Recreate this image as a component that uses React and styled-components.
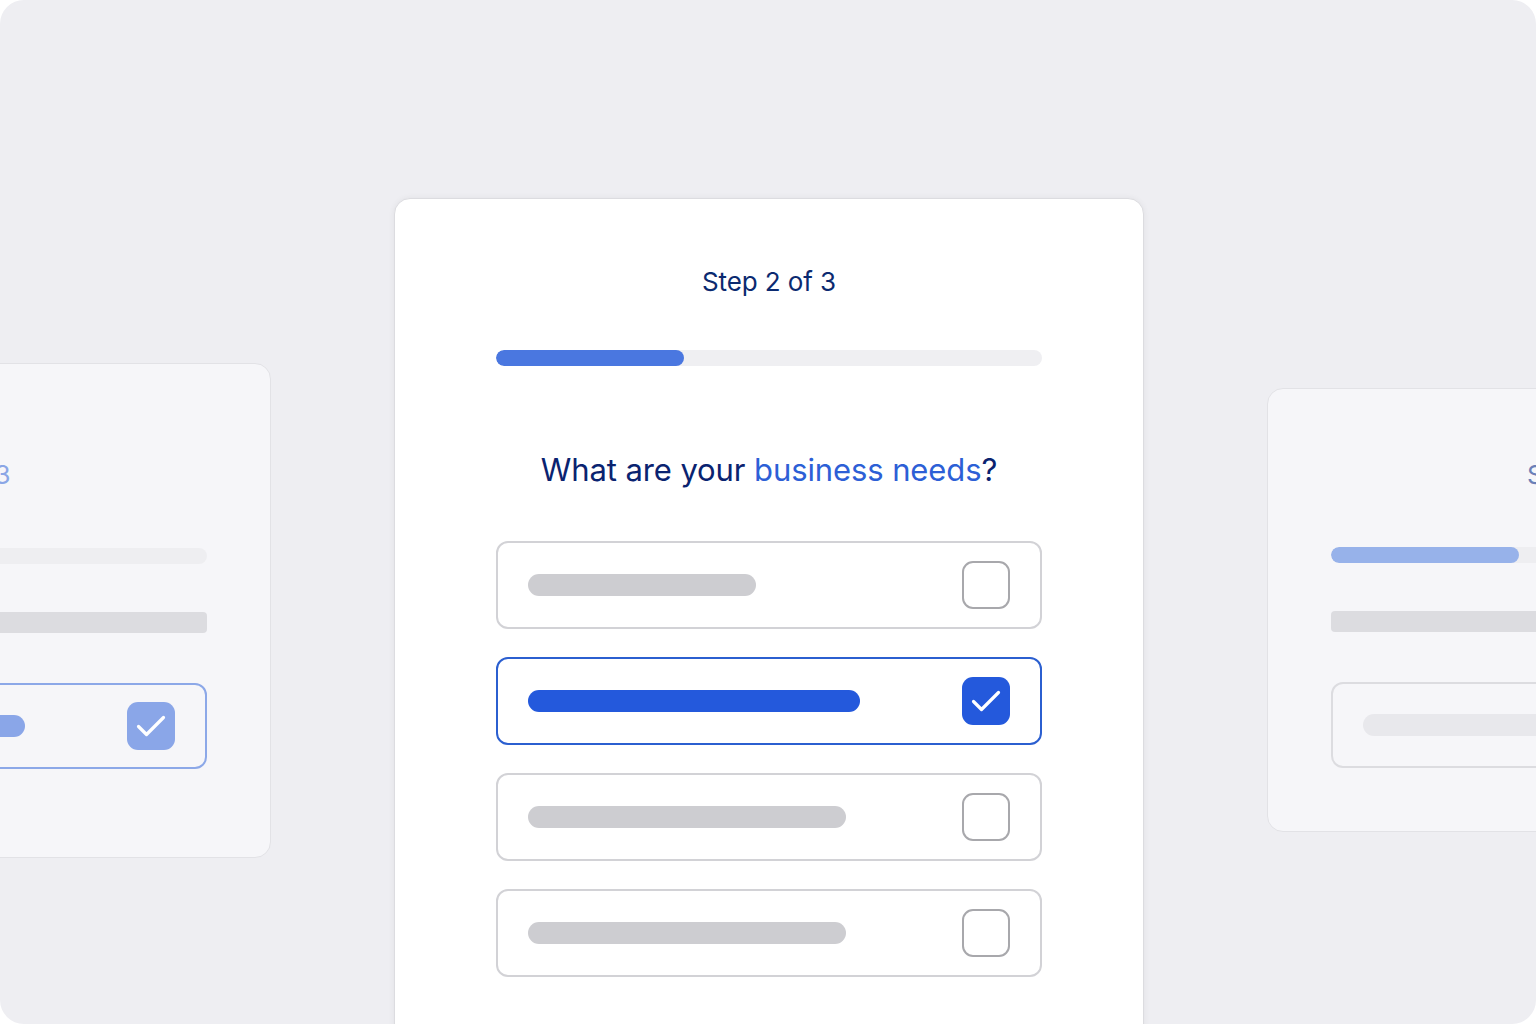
import React from "react";
import styled, { createGlobalStyle } from "styled-components";

const Global = createGlobalStyle`
  html, body { margin: 0; padding: 0; background: #ffffff; }
  body { font-family: Inter, "Noto Sans", "Liberation Sans", sans-serif; }
  * { box-sizing: border-box; }
`;

const Frame = styled.div`
  width: 1536px;
  height: 1024px;
  border-radius: 24px;
  background: #eeeef2;
  overflow: hidden;
  padding-left: 2px;
  display: flex;
  justify-content: center;
  align-items: flex-start;
  gap: 123px;
`;

const MainCard = styled.section`
  flex: 0 0 750px;
  width: 750px;
  height: 880px;
  margin-top: 198px;
  background: #ffffff;
  border: 1px solid #dcdce0;
  border-radius: 16px;
  box-shadow: 0 0 6px rgba(20, 20, 40, 0.06);
  padding: 67px 101px 0;
  display: flex;
  flex-direction: column;
`;

const SideCard = styled.section`
  flex: 0 0 674px;
  width: 674px;
  margin-top: ${(p) => p.$top}px;
  background: #f6f6f9;
  border: 1px solid #e2e2e6;
  border-radius: 16px;
  padding: ${(p) => p.$padTop}px 63px ${(p) => p.$padBottom}px;
  display: flex;
  flex-direction: column;
`;

const StepLabel = styled.div`
  font-size: 26px;
  line-height: 32px;
  text-align: center;
  color: ${(p) => p.$color || "#0b2a70"};
  transform: translateX(${(p) => p.$shift || 0}px);
  margin-bottom: ${(p) => p.$gap}px;
  letter-spacing: -0.1px;
`;

const Track = styled.div`
  height: 16px;
  border-radius: 8px;
  background: ${(p) => p.$bg || "#efeff2"};
  overflow: hidden;
  display: flex;
`;

const Fill = styled.div`
  width: ${(p) => p.$w}px;
  height: 100%;
  border-radius: 8px;
  background: ${(p) => p.$color};
`;

const Heading = styled.h2`
  margin: 85px 0 52px;
  font-size: 31px;
  line-height: 38px;
  font-weight: 400;
  text-align: center;
  color: #0a2370;
  letter-spacing: -0.1px;
`;

const Accent = styled.span`
  color: #2d5fd6;
`;

const HeadingPlaceholder = styled.div`
  margin: 48px 0 50px;
  height: 21px;
  border-radius: 4px;
  background: #dcdce0;
`;

const OptionList = styled.div`
  display: flex;
  flex-direction: column;
  gap: 28px;
`;

const Option = styled.div`
  height: ${(p) => p.$h || 88}px;
  border: 2px solid ${(p) => p.$border};
  border-radius: 12px;
  padding: 0 30px;
  display: flex;
  align-items: center;
  justify-content: space-between;
`;

const Bar = styled.div`
  width: ${(p) => p.$w}px;
  height: 22px;
  border-radius: 11px;
  background: ${(p) => p.$color};
`;

const Box = styled.div`
  flex: 0 0 48px;
  width: 48px;
  height: 48px;
  border-radius: 11px;
  border: ${(p) => (p.$fill ? "none" : "2px solid #a8a8ac")};
  background: ${(p) => p.$fill || "transparent"};
  display: flex;
  align-items: center;
  justify-content: center;
`;

const Check = () => (
  <svg width="48" height="48" viewBox="0 0 48 48" fill="none">
    <path
      d="M11.5 24.5 L19.5 32.5 L36.5 15.5"
      stroke="#ffffff"
      strokeWidth="3.2"
      strokeLinecap="round"
      strokeLinejoin="round"
    />
  </svg>
);

const Checkbox = ({ fill }) => <Box $fill={fill}>{fill ? <Check /> : null}</Box>;

const options = [
  { w: 228, bar: "#cdcdd1", border: "#d2d2d6", checked: false },
  { w: 332, bar: "#2459dc", border: "#2b5fd0", checked: true },
  { w: 318, bar: "#cdcdd1", border: "#d2d2d6", checked: false },
  { w: 318, bar: "#cdcdd1", border: "#d2d2d6", checked: false },
];

export default function App() {
  return (
    <>
      <Global />
      <Frame>
        <SideCard $top={363} $padTop={95} $padBottom={88}>
          <StepLabel $color="#8ba6e6" $shift={12} $gap={57}>
            Step 1 of 3
          </StepLabel>
          <Track $bg="#eeeef1" />
          <HeadingPlaceholder />
          <Option $h={86} $border="#8ca8e8">
            <Bar $w={332} $color="#8aa6e8" />
            <Checkbox fill="#8aa6e8" />
          </Option>
        </SideCard>

        <MainCard>
          <StepLabel $gap={52}>Step 2 of 3</StepLabel>
          <Track>
            <Fill $w={188} $color="#4a77e0" />
          </Track>
          <Heading>
            What are your <Accent>business needs</Accent>?
          </Heading>
          <OptionList>
            {options.map((o, i) => (
              <Option key={i} $border={o.border}>
                <Bar $w={o.w} $color={o.bar} />
                <Checkbox fill={o.checked ? "#2459dc" : null} />
              </Option>
            ))}
          </OptionList>
        </MainCard>

        <SideCard $top={388} $padTop={70} $padBottom={63}>
          <StepLabel $color="#6b80b8" $shift={-10} $gap={56}>
            Step 2 of 3
          </StepLabel>
          <Track $bg="#eeeef1">
            <Fill $w={188} $color="#97b2ea" />
          </Track>
          <HeadingPlaceholder />
          <Option $h={86} $border="#dcdce0">
            <Bar $w={300} $color="#e8e8ec" />
            <Checkbox fill={null} />
          </Option>
        </SideCard>
      </Frame>
    </>
  );
}
